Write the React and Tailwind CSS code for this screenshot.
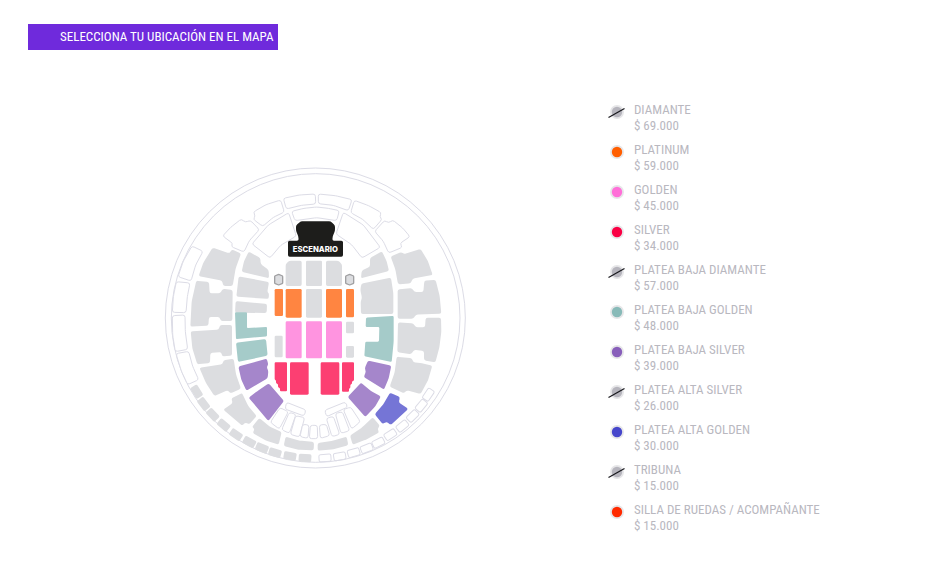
const GRAY = "#dcdde0";
const TEAL = "#a5cbc9";
const PURPLE = "#a586cb";
const BLUE = "#7575d6";
const ORANGE = "#ff8541";
const PINK = "#ff94e0";
const CRIMSON = "#fc3f72";
const LINE = "#dcdce6";

const prices = [
  { name: "DIAMANTE", price: "$ 69.000" },
  { name: "PLATINUM", price: "$ 59.000", color: "#ff5e00" },
  { name: "GOLDEN", price: "$ 45.000", color: "#ff6fd8" },
  { name: "SILVER", price: "$ 34.000", color: "#fa0044" },
  { name: "PLATEA BAJA DIAMANTE", price: "$ 57.000" },
  { name: "PLATEA BAJA GOLDEN", price: "$ 48.000", color: "#88bab8" },
  { name: "PLATEA BAJA SILVER", price: "$ 39.000", color: "#885eba" },
  { name: "PLATEA ALTA SILVER", price: "$ 26.000" },
  { name: "PLATEA ALTA GOLDEN", price: "$ 30.000", color: "#4646cb" },
  { name: "TRIBUNA", price: "$ 15.000" },
  { name: "SILLA DE RUEDAS / ACOMPAÑANTE", price: "$ 15.000", color: "#ff2a00" },
];

// Turns a list of corners into a closed path whose corners are rounded.
function roundedPath(points, radius) {
  const n = points.length;
  let d = "";
  points.forEach(([x, y], i) => {
    const [px, py] = points[(i + n - 1) % n];
    const [nx, ny] = points[(i + 1) % n];
    const a = Math.hypot(px - x, py - y);
    const b = Math.hypot(nx - x, ny - y);
    const ra = Math.min(radius, a / 2) / a;
    const rb = Math.min(radius, b / 2) / b;
    d += `${i ? "L" : "M"}${x + (px - x) * ra} ${y + (py - y) * ra}`;
    d += `Q${x} ${y} ${x + (nx - x) * rb} ${y + (ny - y) * rb}`;
  });
  return d + "Z";
}

function Zone({ points, fill = GRAY, r = 6 }) {
  return <path d={roundedPath(points, r)} fill={fill} />;
}

function Outline({ points, r = 7 }) {
  return <path d={roundedPath(points, r)} fill="#fff" stroke={LINE} strokeWidth="3" />;
}

function Block({ x, y, w, h, fill = GRAY }) {
  return <rect x={x} y={y} width={w} height={h} rx="4" fill={fill} />;
}

// A small outer-ring cell, turned to follow the circle.
function RingCell({ x, y, cx, outlined }) {
  const angle = (Math.atan2(y - 9, x - cx) * 180) / Math.PI - 90;
  return (
    <rect
      x={outlined ? -18 : -19}
      y={outlined ? -11 : -12}
      width={outlined ? 36 : 38}
      height={outlined ? 22 : 24}
      rx="5"
      transform={`translate(${x} ${y}) rotate(${angle})`}
      fill={outlined ? "none" : GRAY}
      stroke={outlined ? LINE : "none"}
      strokeWidth="3"
    />
  );
}

const topLeftOutlines = [
  [[96, 258], [129, 274], [107, 315], [93, 363], [54, 350], [70, 303]],
  [[49, 365], [90, 369], [82, 410], [78, 458], [37, 457], [40, 410]],
  [[244, 177], [256, 187], [271, 181], [298, 209], [268, 242], [252, 276], [214, 260], [218, 250], [188, 228], [212, 202]],
  [[280, 156], [318, 134], [362, 120], [373, 156], [340, 172], [308, 199], [280, 178], [286, 168]],
  [[370, 115], [418, 105], [466, 102], [467, 132], [424, 136], [379, 147]],
  [[386, 158], [325, 195], [276, 252], [330, 294], [362, 256], [409, 228]],
  [[395, 154], [432, 145], [470, 141], [505, 145], [538, 152], [530, 182], [470, 173], [405, 182]],
];

const topRightOutlines = [
  [[25, 102], [76, 107], [126, 119], [115, 152], [70, 136], [25, 131]],
  [[133, 121], [176, 137], [214, 158], [209, 170], [216, 178], [190, 208], [158, 178], [122, 158]],
  [[194, 214], [224, 181], [236, 189], [248, 180], [278, 204], [300, 230], [270, 250], [277, 262], [236, 279], [220, 244]],
  [[100, 157], [160, 195], [211, 262], [156, 294], [125, 254], [78, 222]],
];

const bottomLeftOutlines = [
  [[37, 2], [75, 0], [76, 50], [83, 103], [46, 110], [38, 60]],
  [[48, 116], [86, 109], [98, 154], [116, 194], [83, 209], [64, 168]],
  [[380, 262], [438, 285], [432, 303], [375, 282]],
  [[360, 278], [385, 290], [358, 342], [331, 322]],
  [[388, 292], [408, 298], [388, 355], [365, 344]],
  [[407, 302], [434, 308], [418, 366], [391, 358]],
  [[428, 328], [447, 330], [444, 370], [420, 365]],
  [[451, 331], [472, 331], [473, 371], [448, 371]],
];

const bottomRightOutlines = [
  [[28, 330], [49, 328], [59, 362], [31, 370]],
  [[49, 310], [70, 304], [89, 358], [66, 365]],
  [[76, 296], [97, 290], [119, 347], [93, 355]],
  [[100, 284], [122, 276], [151, 320], [125, 342]],
  [[44, 286], [106, 261], [113, 276], [50, 305]],
];

const leftCells = [[110, 230], [131, 267], [158, 299], [191, 330], [228, 359], [268, 381], [306, 399], [345, 413], [390, 423], [435, 429]];
const rightCells = [[355, 239], [334, 272], [308, 303], [277, 333], [241, 359], [205, 383], [170, 400], [131, 413], [89, 424], [45, 429]];

const hexagon = [[0, -16], [12, -11], [12, 11], [0, 16], [-12, 11], [-12, -11]];

function VenueMap() {
  return (
    <svg viewBox="0 0 930 948" className="w-[310px] max-w-full" role="img" aria-label="Mapa de ubicaciones">
      <circle cx="466" cy="474" r="450" fill="none" stroke={LINE} strokeWidth="3" />
      <circle cx="467" cy="474" r="433" fill="none" stroke={LINE} strokeWidth="3" />

      {topLeftOutlines.map((p, i) => <Outline key={i} points={p} />)}
      <Zone points={[[158, 263], [208, 280], [216, 268], [243, 281], [227, 325], [218, 378], [190, 378], [186, 362], [116, 348], [130, 308]]} />
      <Zone points={[[109, 362], [147, 366], [149, 400], [181, 400], [188, 386], [218, 390], [217, 483], [182, 483], [179, 471], [147, 471], [145, 497], [91, 500], [95, 424]]} />
      <Zone points={[[266, 275], [301, 294], [302, 312], [326, 330], [327, 355], [245, 335], [252, 304]]} />
      <Zone points={[[236, 349], [327, 366], [322, 396], [327, 400], [326, 417], [229, 410]]} />
      <Zone points={[[227, 423], [321, 432], [320, 459], [225, 458]]} />

      <g transform="translate(450 0)">
        {topRightOutlines.map((p, i) => <Outline key={i} points={p} />)}
        <Zone points={[[216, 274], [230, 304], [237, 333], [153, 355], [155, 332], [180, 320], [180, 294]]} />
        <Zone points={[[154, 371], [243, 353], [250, 400], [250, 462], [153, 462], [152, 424], [156, 414], [151, 390]]} />
        <Zone points={[[332, 267], [354, 304], [368, 345], [308, 356], [302, 370], [264, 373], [256, 328], [242, 290], [274, 276], [282, 282]]} />
        <Zone points={[[263, 388], [306, 384], [313, 396], [340, 396], [343, 362], [377, 360], [389, 408], [394, 461], [318, 464], [310, 476], [263, 476]]} />
      </g>

      <g transform="translate(0 465)">
        {bottomLeftOutlines.map((p, i) => <Outline key={i} points={p} />)}
        <Zone points={[[92, 49], [176, 44], [180, 30], [216, 30], [216, 122], [186, 124], [184, 111], [151, 114], [150, 144], [112, 148], [97, 100]]} />
        <Zone points={[[118, 158], [188, 148], [190, 136], [221, 131], [228, 178], [243, 221], [212, 235], [203, 226], [163, 243], [138, 204]]} />
        <Zone points={[[246, 234], [264, 272], [290, 303], [268, 328], [256, 322], [247, 332], [190, 284], [218, 264], [214, 250]]} />
        <Zone points={[[298, 309], [328, 334], [365, 351], [356, 389], [316, 376], [278, 354], [284, 342], [276, 336]]} />
        <Zone points={[[377, 365], [420, 377], [462, 381], [461, 406], [415, 404], [371, 393]]} />
        <Zone fill={TEAL} r={3} points={[[225, -8], [261, -8], [261, 39], [321, 36], [321, 64], [228, 72]]} />
        <Zone fill={TEAL} points={[[228, 83], [318, 72], [323, 122], [234, 141]]} />
        <Zone fill={PURPLE} points={[[235, 155], [320, 131], [325, 148], [320, 157], [325, 167], [323, 190], [259, 227], [244, 194]]} />
        <Zone fill={PURPLE} points={[[326, 205], [372, 258], [325, 318], [266, 248], [292, 228]]} />
        {leftCells.map(([x, y]) => <RingCell key={x} x={x} y={y} cx={466} />)}
      </g>

      <g transform="translate(450 465)">
        {bottomRightOutlines.map((p, i) => <Outline key={i} points={p} />)}
        <Zone points={[[264, 22], [310, 25], [317, 37], [345, 37], [347, 8], [393, 8], [394, 50], [388, 98], [376, 142], [342, 136], [342, 108], [312, 104], [304, 118], [262, 112]]} />
        <Zone points={[[260, 125], [306, 130], [310, 142], [336, 145], [367, 152], [354, 196], [332, 237], [290, 226], [282, 235], [239, 215], [254, 172]]} />
        <Zone points={[[188, 307], [210, 332], [202, 342], [208, 352], [168, 374], [128, 389], [120, 362], [158, 336]]} />
        <Zone points={[[23, 384], [70, 377], [110, 365], [115, 391], [70, 403], [23, 407]]} />
        <Zone fill={TEAL} r={4} points={[[168, 8], [251, 3], [251, 80], [245, 141], [163, 124], [166, 80], [207, 80], [208, 36], [167, 36]]} />
        <Zone fill={PURPLE} points={[[174, 137], [244, 152], [236, 190], [222, 224], [161, 186], [168, 170], [164, 160]]} />
        <Zone fill={PURPLE} points={[[153, 203], [183, 228], [213, 244], [196, 274], [166, 306], [113, 246]]} />
        <Zone fill={BLUE} points={[[240, 233], [270, 246], [266, 262], [295, 282], [242, 330], [230, 320], [218, 327], [194, 298], [220, 268]]} />
        {rightCells.map(([x, y]) => <RingCell key={x} x={x} y={y} cx={16} outlined />)}
      </g>

      <Zone r={5} points={[[388, 302], [425, 302], [425, 378], [377, 378], [377, 312]]} />
      <Block x={438} y={302} w={48} h={76} />
      <Zone r={5} points={[[498, 302], [535, 302], [546, 313], [546, 378], [498, 378]]} />
      <Block x={344} y={387} w={25} h={81} fill={ORANGE} />
      <Block x={377} y={387} w={48} h={86} fill={ORANGE} />
      <Block x={438} y={387} w={48} h={86} />
      <Block x={498} y={387} w={48} h={86} fill={ORANGE} />
      <Block x={558} y={387} w={24} h={85} fill={ORANGE} />
      <Block x={377} y={484} w={48} h={111} fill={PINK} />
      <Block x={438} y={484} w={48} h={111} fill={PINK} />
      <Block x={498} y={484} w={48} h={111} fill={PINK} />
      <Block x={344} y={527} w={24} h={65} />
      <Block x={558} y={485} w={24} h={35} />
      <Block x={558} y={558} w={24} h={35} />
      <Zone fill={CRIMSON} r={3} points={[[344, 607], [381, 607], [381, 694], [360, 694], [360, 684], [354, 682], [354, 672], [348, 670], [348, 661], [344, 659]]} />
      <Block x={390} y={607} w={56} h={97} fill={CRIMSON} />
      <Block x={482} y={607} w={56} h={97} fill={CRIMSON} />
      <Zone fill={CRIMSON} r={3} points={[[546, 607], [582, 607], [582, 662], [576, 664], [576, 672], [571, 674], [571, 684], [567, 686], [567, 695], [546, 695]]} />

      <path transform="translate(356 359)" d={roundedPath(hexagon, 2)} fill={GRAY} stroke="#a0a0a2" strokeWidth="4" />
      <path transform="translate(569 359)" d={roundedPath(hexagon, 2)} fill={GRAY} stroke="#a0a0a2" strokeWidth="4" />

      <Zone
        fill="#1d1d1b"
        r={5}
        points={[[422, 184], [512, 184], [525, 196], [525, 212], [518, 230], [517, 242], [549, 242], [549, 290], [384, 290], [384, 242], [416, 242], [415, 230], [408, 212], [408, 196]]}
      />
      <text x="466" y="277" textAnchor="middle" fill="#fff" fontSize="23" className="font-['Inter',sans-serif] font-extrabold">
        ESCENARIO
      </text>
    </svg>
  );
}

function Marker({ color }) {
  return (
    <svg viewBox="0 0 18 20" className="h-5 w-[18px] shrink-0" aria-hidden="true">
      <circle cx="9" cy="10" r="7" fill="#e6e6e8" />
      <circle cx="9" cy="10" r="5.2" fill={color || "#b6b5bd"} />
      {!color && <path d="M0.5 15.5L16.5 6.5" stroke="#17171c" strokeWidth="1.2" />}
    </svg>
  );
}

export default function App() {
  return (
    <main className="bg-white px-7 py-6 font-['Roboto_Condensed','Roboto',sans-serif]">
      <h1 className="flex h-[26px] w-[250px] items-center bg-[#6f2adc] pl-8 text-[13px] font-normal whitespace-nowrap text-white">
        SELECCIONA TU UBICACIÓN EN EL MAPA
      </h1>
      <div className="mt-[52px] grid grid-cols-[65%_35%] items-center">
        <div className="flex justify-center">
          <VenueMap />
        </div>
        <ul className="flex flex-col gap-2 pl-1.5 text-[13px] leading-4 text-[#b9b8bf]">
          {prices.map((item) => (
            <li key={item.name} className="flex items-start gap-2">
              <Marker color={item.color} />
              <div>
                <p>{item.name}</p>
                <p>{item.price}</p>
              </div>
            </li>
          ))}
        </ul>
      </div>
    </main>
  );
}
